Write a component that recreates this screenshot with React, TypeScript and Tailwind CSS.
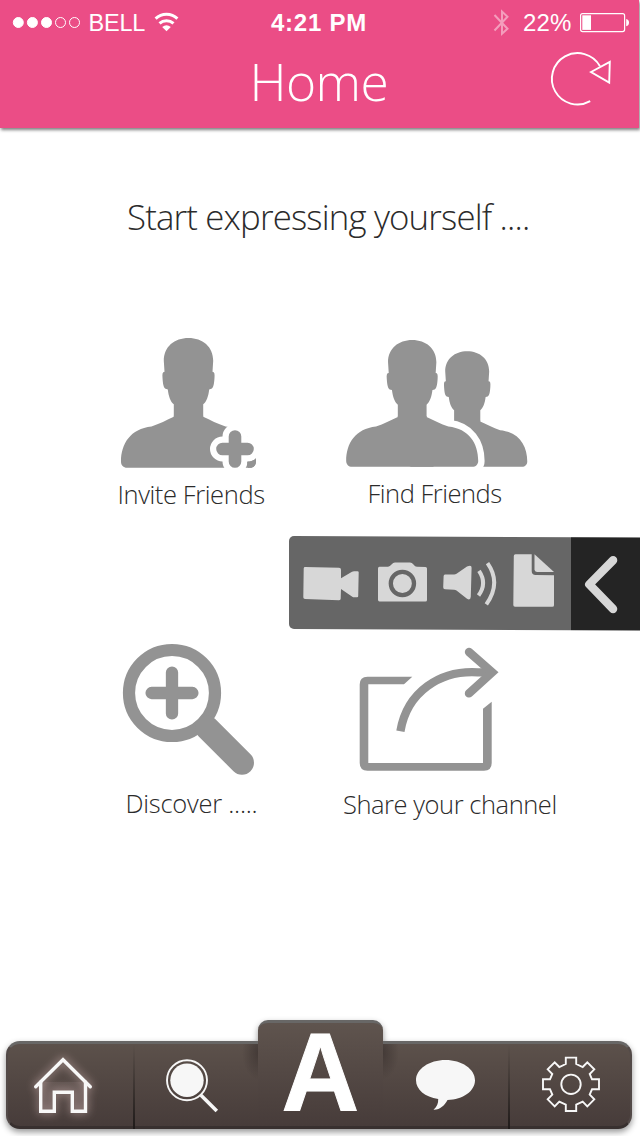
import type { ReactNode } from "react";

const PERSON_HEAD =
  "M0 -129.7C14 -129.7 24.7 -121 24.7 -107L24 -96C26 -96 26.3 -94 26 -90C25.6 -84 25 -79 22 -78.7L20.7 -78.4C20 -72 18 -66 14.7 -63.5V-51H-14.7V-63.5C-18 -66 -20 -72 -20.7 -78.4L-22 -78.7C-25 -79 -25.6 -84 -26 -90C-26.3 -94 -26 -96 -24 -96L-24.7 -107C-24.7 -121 -14 -129.7 0 -129.7Z";
const PERSON_BODY =
  "M-14.7 -52V-51C-22 -47.5 -29 -44 -37 -41.2C-58 -39 -67.5 -24 -67.5 -6C-67.5 -2.5 -65 0 -61.5 0H61.5C65 0 67.5 -2.5 67.5 -6C67.5 -24 58 -39 37 -41.2C29 -44 22 -47.5 14.7 -51V-52Z";

function Person({ x, y, scale = 1 }: { x: number; y: number; scale?: number }) {
  return (
    <g transform={`translate(${x} ${y}) scale(${scale})`}>
      <path d={PERSON_HEAD} />
      <path d={PERSON_BODY} />
    </g>
  );
}

function Tile({ icon, label, className }: { icon: ReactNode; label: string; className: string }) {
  return (
    <button className={`flex flex-col items-start text-left text-[#2b2b2b] ${className}`}>
      {icon}
      <span className="h-[36px] text-[25.5px] leading-[36px] font-light whitespace-nowrap">{label}</span>
    </button>
  );
}

function StatusBar() {
  return (
    <div className="flex h-[46px] items-center font-['Liberation_Sans',sans-serif] text-white">
      <svg width="82" height="46" fill="white" stroke="white" strokeWidth="1">
        <circle cx="18.3" cy="22.5" r="5" />
        <circle cx="32.4" cy="22.5" r="5" />
        <circle cx="46.5" cy="22.5" r="5" />
        <circle cx="60.5" cy="22.5" r="5" fill="none" />
        <circle cx="74.5" cy="22.5" r="5" fill="none" />
      </svg>
      <span className="ml-[6px] w-[64px] pl-[0.5px] text-[23.5px] leading-[46px] tracking-[-0.2px]">BELL</span>
      <svg width="28" height="46" viewBox="152 0 28 46" fill="none" stroke="white" strokeWidth="3">
        <path d="M155.6 18.6A16 16 0 0 1 177.4 18.6" />
        <path d="M159.5 23.4A10.5 10.5 0 0 1 173.5 23.4" />
        <path d="M162.2 27Q166.5 23.6 170.8 27L166.5 31.2Z" fill="white" stroke="none" />
      </svg>
      <span className="ml-[91px] w-[110px] text-[24px] leading-[46px] font-bold tracking-[0.75px] whitespace-nowrap">4:21 PM</span>
      <svg className="ml-[110px] opacity-45" width="20" height="46" viewBox="491 0 20 46" fill="none" stroke="white" strokeWidth="2">
        <path d="M494.5 15L507.5 28.7L502 33.7V11.5L507.5 16.7L494.5 30.5" />
      </svg>
      <span className="ml-[12px] w-[55px] text-[24px] leading-[46px] tracking-[0.2px]">22%</span>
      <svg width="54" height="46" viewBox="578 0 54 46" fill="none" stroke="white" strokeWidth="1.2">
        <rect x="580.6" y="13.6" width="44" height="18" rx="2" />
        <rect x="582.3" y="15.3" width="8.7" height="14.6" fill="white" stroke="none" />
        <path d="M626.2 19Q629 19.5 629 22.6Q629 25.7 626.2 26.2Z" fill="white" stroke="none" />
      </svg>
    </div>
  );
}

function Toolbar() {
  return (
    <div className="absolute top-[536px] right-0 flex h-[93px] w-[351.5px] origin-left skew-y-[0.25deg] overflow-hidden rounded-l-[5px] bg-[#666666] text-[#d7d7d7]">
      <div className="flex w-[282px] pl-[13.5px]">
        <svg className="shrink-0" width="56" height="93" viewBox="303 537 56 93" fill="currentColor">
          <path d="M305 568L339 568.5Q341 568.6 341 570.5V579L352 572.6Q353 572 354 572H357.5Q358.7 572 358.7 573L358.2 597Q358.2 598 357 598H354Q353 598 352.3 597.5L341 589.7L340.7 599.5Q340.7 601 339 601L305 600Q303.3 599.8 303.3 598.2L303.7 569.5Q303.8 568 305 568Z" />
        </svg>
        <svg className="ml-[19px] shrink-0" width="49" height="93" viewBox="378 537 49 93">
          <path d="M379.5 567.3H388Q390 567 391.5 565Q393 563 395 563H410Q412 563 413.5 565Q415 567.3 417 567.3H425.5Q427 567.3 427 569V600.3Q427 602 425.5 602H379.5Q378 602 378 600.3V569Q378 567.3 379.5 567.3Z" fill="currentColor" />
          <circle cx="402.4" cy="584" r="11.6" fill="none" stroke="#666666" strokeWidth="4.3" />
        </svg>
        <svg className="ml-[15px] shrink-0" width="55" height="93" viewBox="442 537 55 93" fill="none" stroke="currentColor" strokeWidth="4">
          <path d="M445 574.7H454Q455.5 574.7 456.5 574L467 566.8Q471.7 564.5 471.6 568L470.8 597Q470.5 601 467 599L456.5 590.8Q455.5 590 454 590L445 589.6Q443.2 589.5 443.2 587.5L443.6 576.5Q443.7 574.7 445 574.7Z" fill="currentColor" stroke="none" />
          <path d="M479 571Q487.5 583.5 478.5 595.7" />
          <path d="M487.5 563.2Q501.5 583 486.3 604.5" />
        </svg>
        <svg className="ml-[16px] shrink-0" width="41" height="93" viewBox="513 537 41 93" fill="currentColor">
          <path d="M515.5 554.3H531.7V571Q531.7 575 535.7 575H554V605Q554 606.7 552.3 606.7H515Q513.3 606.7 513.3 605L513.8 556Q513.8 554.3 515.5 554.3Z" />
          <path d="M534.5 554.3L554 571.8H537Q534.5 571.8 534.5 569.5Z" />
        </svg>
      </div>
      <div className="flex-1 bg-[#242424]">
        <svg width="69" height="93" viewBox="571.2 537.4 69 93" fill="none" stroke="currentColor" strokeWidth="8.4" strokeLinecap="round" strokeLinejoin="round">
          <path d="M613.3 560.3L589.5 584.5L613.3 609" />
        </svg>
      </div>
    </div>
  );
}

const SEGMENT = "h-[88px] border-t-[3px] border-b-[3px] border-t-[#686766] border-b-[#38302f] bg-linear-to-b from-[#5c514b] to-[#473c3a]";

function BottomNav() {
  return (
    <nav className="flex h-[116px] items-end px-[6px] pb-[7px] [filter:drop-shadow(0_3px_3px_rgba(0,0,0,0.42))]">
      <div className={`${SEGMENT} w-[127px] rounded-l-[14px] border-l-2 border-l-[#534a48]`}>
        <svg className="overflow-visible [filter:drop-shadow(0_0_5px_rgba(255,220,220,0.65))]" width="125" height="82" viewBox="8 1044 125 82" fill="#ffe8e812" stroke="#f8f8f8" strokeWidth="3.4" strokeLinecap="round">
          <path d="M40.7 1082V1111.2H54.3V1092.3H72.3V1111.2H85.5V1082" />
          <path d="M35.7 1086.7L63 1059.7L90.3 1086.7" fill="none" />
        </svg>
      </div>
      <div className="h-[88px] w-[2px] border-t-[3px] border-[#686766] bg-linear-to-b from-[#5c514b] to-[#201b1a]" />
      <div className={`${SEGMENT} w-[123px]`}>
        <svg width="123" height="82" viewBox="135 1044 123 82" fill="none" stroke="#f7f7f7">
          <radialGradient id="tab-shade" cx="0.5" cy="0.5" r="0.5">
            <stop offset="0" stopColor="#2c2423" stopOpacity="0.5" />
            <stop offset="1" stopColor="#2c2423" stopOpacity="0" />
          </radialGradient>
          <ellipse cx="259" cy="1052" rx="17" ry="28" fill="url(#tab-shade)" stroke="none" />
          <circle cx="187" cy="1080.3" r="20" strokeWidth="1.9" />
          <circle cx="187" cy="1080.3" r="16.7" fill="#f7f7f7" stroke="none" />
          <path d="M201 1095.2L216.8 1111" strokeWidth="3.6" />
        </svg>
      </div>
      <button className="flex h-[109px] w-[125px] justify-center rounded-t-[10px] border-t-[3px] border-b-[3px] border-t-[#686766] border-b-[#38302f] bg-linear-to-b from-[#5f544e] to-[#473c3a] font-['Liberation_Sans',sans-serif] text-[112px] leading-[100px] font-bold text-white">
        <span className="h-[100px] scale-x-[0.96] [-webkit-text-stroke:1px_white]">A</span>
      </button>
      <div className={`${SEGMENT} w-[125px]`}>
        <svg width="125" height="82" viewBox="383 1044 125 82" fill="#f7f7f7">
          <ellipse cx="382" cy="1052" rx="17" ry="28" fill="url(#tab-shade)" />
          <path d="M438.2 1099C438.4 1103.5 436.8 1107.2 433.5 1109.7C440 1110 444.5 1105.5 447.5 1100C463 1099.5 475 1091 475 1080.2C475 1069 461.8 1060 445.5 1060S416 1069 416 1080.2C416 1089.5 425 1097 438.2 1099Z" />
        </svg>
      </div>
      <div className="h-[88px] w-[2px] border-t-[3px] border-[#686766] bg-linear-to-b from-[#5c514b] to-[#201b1a]" />
      <div className={`${SEGMENT} w-[122px] rounded-r-[14px] border-r-2 border-r-[#534a48]`}>
        <svg width="120" height="82" viewBox="510 1044 120 82" fill="none" stroke="#f7f7f7" strokeWidth="1.9">
          <circle cx="571" cy="1084.3" r="9.7" />
          <path
            transform="translate(571 1084.3)"
            d="M-5.2 -26.7H5.2V-20.3L11.7 -17.3L16.3 -22L23.3 -15L18.7 -10.3L21 -5H28V5H21L18.7 10.3L23.3 15L16.3 22L11.7 17.3L5.2 20.3V26.7H-5.2V20.3L-11.7 17.3L-16.3 22L-23.3 15L-18.7 10.3L-21 5H-28V-5H-21L-18.7 -10.3L-23.3 -15L-16.3 -22L-11.7 -17.3L-5.2 -20.3Z"
          />
        </svg>
      </div>
    </nav>
  );
}

export default function App() {
  return (
    <div className="relative flex h-[1136px] w-[640px] flex-col bg-white font-['Open_Sans','Noto_Sans',sans-serif]">
      <header className="h-[128px] w-[639px] bg-[#eb4d86] shadow-[1px_2px_3px_rgba(0,0,0,0.5)]">
        <StatusBar />
        <div className="flex h-[82px] justify-between pl-[249.5px]">
          <h1 className="text-[51.5px] leading-[71px] font-light tracking-[-0.6px] text-white">Home</h1>
          <svg width="91" height="82" viewBox="548 46 91 82" fill="none" stroke="white" strokeWidth="1.9">
            <path d="M600 66.2A25.7 25.7 0 1 0 590.2 101.2" />
            <path d="M591 72L609.8 61.8L609.2 82.6Z" />
          </svg>
        </div>
      </header>

      <main className="flex-1 text-[#2b2b2b]">
        <h2 className="mt-[63px] ml-[127px] h-[52px] text-[34.8px] leading-[52px] font-light tracking-[-0.83px] whitespace-nowrap">
          Start expressing yourself ....
        </h2>

        <section className="mt-[93px] flex items-start pl-[118px]">
          <Tile
            className="w-[225px] tracking-[-0.4px] [&>span]:-ml-[0.5px]"
            label="Invite Friends"
            icon={
              <svg width="139" height="140" viewBox="118 336 139 140" fill="#939393">
                <Person x={188.5} y={467.8} />
                <path d="M235 436.5V461.5M222.5 449H247.5" fill="none" stroke="white" strokeWidth="25" strokeLinecap="round" />
                <path d="M235 436.5V461.5M222.5 449H247.5" fill="none" stroke="#939393" strokeWidth="12.6" strokeLinecap="round" />
                <path d="M248 468C247.5 465.5 247 463.5 247.3 461.7C251 461.5 254 460.5 256 458.7C256.2 464 255 467.8 250 467.8Z" />
              </svg>
            }
          />
          <Tile
            className="w-[200px] pl-[1px] tracking-[-0.5px] [&>span]:pl-[23.5px]"
            label="Find Friends"
            icon={
              <svg width="188" height="139" viewBox="344 336 188 139" fill="#939393">
                <Person x={467.2} y={466.8} scale={0.89} />
                <path
                  d="M448.5 426.3C468.5 428.5 478.1 443 478.1 461C478.1 464.5 476 466.8 472 466.8H440V426Z"
                  fill="white"
                  stroke="white"
                  strokeWidth="13"
                />
                <Person x={412.2} y={466.8} scale={0.978} />
              </svg>
            }
          />
        </section>

        <section className="mt-[131px] flex items-start pl-[122px]">
          <Tile
            className="w-[221px] tracking-[-0.25px] [&>span]:pl-[3.5px]"
            label="Discover ....."
            icon={
              <svg width="134" height="142" viewBox="122 643 134 142" fill="none" stroke="#939393" strokeLinecap="round">
                <circle cx="172" cy="693" r="43" strokeWidth="12.2" />
                <path d="M172 672.6V713.4M151.6 693H192.4" strokeWidth="12.3" />
                <path d="M207 727.7L242 762.8" strokeWidth="24" />
              </svg>
            }
          />
          <Tile
            className="w-[220px] tracking-[-0.45px]"
            label="Share your channel"
            icon={
              <svg width="160" height="143" viewBox="343 643 160 143" fill="#939393">
                <path d="M412.3 676.7L404 684.2H368.3V763H483V708.7L491.7 701.7V763Q491.7 770.7 484 770.7H367.5Q359.7 770.7 359.7 763V684.5Q359.7 676.7 367.5 676.7Z" />
                <path d="M400.4 731.3C407 692 440 670 478 672.4H490" fill="none" stroke="#939393" strokeWidth="8.3" />
                <path d="M469 652L492.2 672.4L469 693.4" fill="none" stroke="#939393" strokeWidth="8.4" strokeLinecap="round" strokeMiterlimit="8" />
              </svg>
            }
          />
        </section>
      </main>

      <Toolbar />
      <BottomNav />
    </div>
  );
}
